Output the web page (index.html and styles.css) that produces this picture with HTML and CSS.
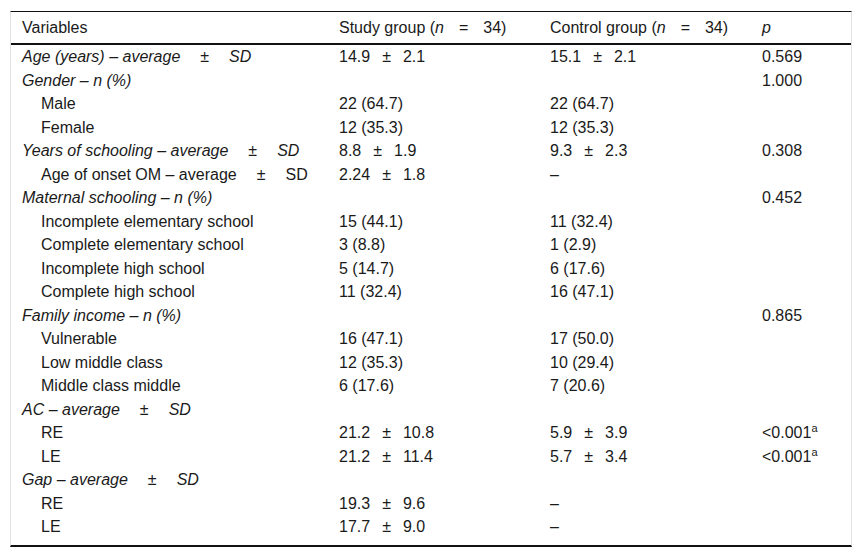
FILE: index.html
```html
<!DOCTYPE html>
<html lang="en">
<head>
<meta charset="utf-8">
<title>Table</title>
<link rel="stylesheet" href="styles.css">
</head>
<body>
<div class="wrap">
<table class="data">
<colgroup>
<col class="c1"><col class="c2"><col class="c3"><col class="c4">
</colgroup>
<thead>
<tr>
<th>Variables</th>
<th>Study group (<i>n</i><span class="hop">=</span>34)</th>
<th>Control group (<i>n</i><span class="hop">=</span>34)</th>
<th><i>p</i></th>
</tr>
</thead>
<tbody>
<tr><td class="it">Age (years) – average<span class="lop">±</span>SD</td><td>14.9<span class="op">±</span>2.1</td><td>15.1<span class="op">±</span>2.1</td><td>0.569</td></tr>
<tr><td class="it">Gender – n (%)</td><td></td><td></td><td>1.000</td></tr>
<tr><td class="ind">Male</td><td>22 (64.7)</td><td>22 (64.7)</td><td></td></tr>
<tr><td class="ind">Female</td><td>12 (35.3)</td><td>12 (35.3)</td><td></td></tr>
<tr><td class="it">Years of schooling – average<span class="lop">±</span>SD</td><td>8.8<span class="op">±</span>1.9</td><td>9.3<span class="op">±</span>2.3</td><td>0.308</td></tr>
<tr><td class="ind">Age of onset OM – average<span class="lop">±</span>SD</td><td>2.24<span class="op">±</span>1.8</td><td>–</td><td></td></tr>
<tr><td class="it">Maternal schooling – n (%)</td><td></td><td></td><td>0.452</td></tr>
<tr><td class="ind">Incomplete elementary school</td><td>15 (44.1)</td><td>11 (32.4)</td><td></td></tr>
<tr><td class="ind">Complete elementary school</td><td>3 (8.8)</td><td>1 (2.9)</td><td></td></tr>
<tr><td class="ind">Incomplete high school</td><td>5 (14.7)</td><td>6 (17.6)</td><td></td></tr>
<tr><td class="ind">Complete high school</td><td>11 (32.4)</td><td>16 (47.1)</td><td></td></tr>
<tr><td class="it">Family income – n (%)</td><td></td><td></td><td>0.865</td></tr>
<tr><td class="ind">Vulnerable</td><td>16 (47.1)</td><td>17 (50.0)</td><td></td></tr>
<tr><td class="ind">Low middle class</td><td>12 (35.3)</td><td>10 (29.4)</td><td></td></tr>
<tr><td class="ind">Middle class middle</td><td>6 (17.6)</td><td>7 (20.6)</td><td></td></tr>
<tr><td class="it">AC – average<span class="lop">±</span>SD</td><td></td><td></td><td></td></tr>
<tr><td class="ind">RE</td><td>21.2<span class="op">±</span>10.8</td><td>5.9<span class="op">±</span>3.9</td><td>&lt;0.001<sup>a</sup></td></tr>
<tr><td class="ind">LE</td><td>21.2<span class="op">±</span>11.4</td><td>5.7<span class="op">±</span>3.4</td><td>&lt;0.001<sup>a</sup></td></tr>
<tr><td class="it">Gap – average<span class="lop">±</span>SD</td><td></td><td></td><td></td></tr>
<tr><td class="ind">RE</td><td>19.3<span class="op">±</span>9.6</td><td>–</td><td></td></tr>
<tr><td class="ind">LE</td><td>17.7<span class="op">±</span>9.0</td><td>–</td><td></td></tr>
</tbody>
</table>
</div>
</body>
</html>
```
FILE: styles.css
```css
html, body {
  margin: 0;
  padding: 0;
  background: #fff;
}
body {
  padding: 11px 10px 0 10px;
  font-family: "Liberation Sans", Arial, sans-serif;
  font-size: 16px;
  color: #1a1a1a;
}
.wrap {
  border-top: 1px solid #111;
  border-bottom: 2px solid #111;
  border-left: 1px solid #e2e2e2;
  border-right: 1px solid #e2e2e2;
  padding-bottom: 6px;
}
.data {
  width: 100%;
  border-collapse: collapse;
  table-layout: fixed;
}
.c1 { width: 317px; }
.c2 { width: 211px; }
.c3 { width: 212px; }
.data th {
  font-weight: normal;
  text-align: left;
  padding: 6px 11px 6px 11px;
  line-height: 19px;
  border-bottom: 2px solid #111;
  white-space: nowrap;
}
.data td {
  padding: 2px 11px;
  line-height: 19.5px;
  white-space: nowrap;
  vertical-align: top;
}
.data .it { font-style: italic; }
.data .ind { padding-left: 30px; }
.op {
  padding: 0 12px;
}
.lop {
  padding: 0 20px;
}
.hop {
  padding: 0 15px;
}
sup {
  font-size: 11px;
  line-height: 0;
  vertical-align: 6px;
}
```
